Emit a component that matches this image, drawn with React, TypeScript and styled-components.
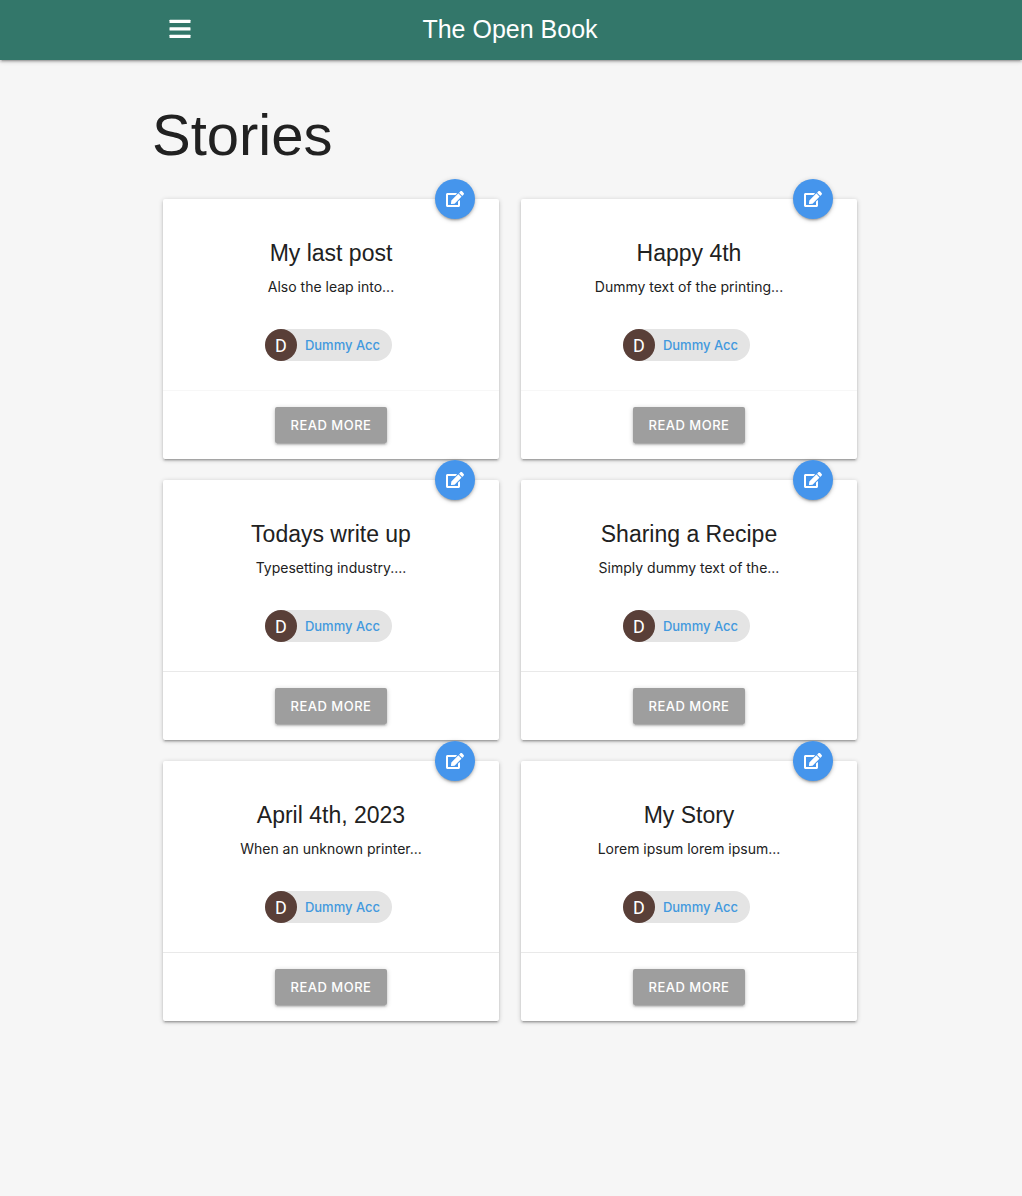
import React from "react";
import styled, { createGlobalStyle } from "styled-components";
import { FaEdit } from "react-icons/fa";

const GlobalStyle = createGlobalStyle`
  *, *::before, *::after { box-sizing: border-box; }
  body {
    margin: 0;
    min-height: 100vh;
    background: #f6f6f6;
    color: #212121;
    font-family: Inter, "Open Sans", sans-serif;
    font-size: 14px;
    line-height: 21px;
  }
  a { color: inherit; text-decoration: none; }
`;

const headingFont = '"Liberation Sans", Arial, sans-serif';

const raised =
  "0 2px 2px 0 rgba(0,0,0,0.14), 0 3px 1px -2px rgba(0,0,0,0.12), 0 1px 5px 0 rgba(0,0,0,0.2)";

const Header = styled.header`
  background: #33776a;
  color: #fff;
  padding: 0 2px 2px 0;
  box-shadow: ${raised};
`;

const Nav = styled.nav`
  display: grid;
  grid-template-columns: 1fr auto 1fr;
  align-items: center;
  width: 100%;
  max-width: 716px;
  height: 58px;
  margin: 0 auto;
`;

const MenuButton = styled.button`
  display: flex;
  justify-self: start;
  margin: 0 17px;
  padding: 0;
  border: 0;
  background: none;
  color: inherit;
  cursor: pointer;
`;

const Brand = styled.a`
  font-family: ${headingFont};
  font-size: 25px;
  line-height: 58px;
`;

const Main = styled.main`
  padding-right: 2px;
`;

const Container = styled.div`
  width: 100%;
  max-width: 716px;
  margin: 0 auto;
`;

const PageTitle = styled.h1`
  margin: 0;
  padding: 41px 0 30px;
  font-family: ${headingFont};
  font-size: 58px;
  font-weight: 400;
  line-height: 68px;
`;

const Grid = styled.div`
  display: grid;
  grid-template-columns: repeat(auto-fit, minmax(300px, 1fr));
  gap: 21px 22px;
  padding: 0 11px 21px;
`;

const Card = styled.article`
  position: relative;
  background: #fff;
  border-radius: 2px;
  text-align: center;
  box-shadow: ${raised};
`;

const EditLink = styled.a`
  position: absolute;
  top: -20px;
  right: 24px;
  display: flex;
  align-items: center;
  justify-content: center;
  width: 40px;
  height: 40px;
  border-radius: 50%;
  background: #4595ec;
  color: #fff;
  box-shadow: ${raised};
`;

const CardBody = styled.div`
  padding: 38px 24px 29px;
`;

const CardTitle = styled.h2`
  margin: 0;
  font-family: ${headingFont};
  font-size: 23px;
  font-weight: 400;
  line-height: 32px;
`;

const Excerpt = styled.p`
  margin: 7px 0 32px;
`;

const Chip = styled.div`
  display: inline-flex;
  align-items: center;
  gap: 8px;
  height: 32px;
  margin-right: 5px;
  padding-right: 12px;
  border-radius: 16px;
  background: #e4e4e4;
  color: #4299de;
  font-size: 13px;
  font-weight: 500;
  vertical-align: top;
`;

const Avatar = styled.span`
  display: flex;
  align-items: center;
  justify-content: center;
  width: 32px;
  height: 32px;
  border-radius: 50%;
  background: #593f38;
  color: #fff;
  font-family: Roboto, sans-serif;
  font-size: 18px;
  font-weight: 400;
`;

const CardAction = styled.div<{ $faint: boolean }>`
  padding: 16px 24px;
  border-top: 1px solid ${(p) => (p.$faint ? "#f7f7f7" : "#e9e9e9")};
`;

const ReadMore = styled.button`
  display: inline-block;
  height: 36px;
  padding: 0 16px;
  border: 0;
  border-radius: 2px;
  background: #9e9e9e;
  color: #fff;
  font: 500 13px/36px Inter, "Open Sans", sans-serif;
  letter-spacing: 0.5px;
  text-transform: uppercase;
  vertical-align: top;
  cursor: pointer;
  box-shadow: ${raised};
`;

const stories = [
  { title: "My last post", excerpt: "Also the leap into..." },
  { title: "Happy 4th", excerpt: "Dummy text of the printing..." },
  { title: "Todays write up", excerpt: "Typesetting industry...." },
  { title: "Sharing a Recipe", excerpt: "Simply dummy text of the..." },
  { title: "April 4th, 2023", excerpt: "When an unknown printer..." },
  { title: "My Story", excerpt: "Lorem ipsum lorem ipsum..." },
];

export default function App() {
  return (
    <>
      <GlobalStyle />
      <Header>
        <Nav>
          <MenuButton aria-label="Open menu">
            <svg width="22" height="20" viewBox="0 0 22 20" fill="currentColor" aria-hidden="true">
              <rect x="0.5" y="0.7" width="21" height="3.4" rx="0.6" />
              <rect x="0.5" y="8.2" width="21" height="3.4" rx="0.6" />
              <rect x="0.5" y="15.7" width="21" height="3.4" rx="0.6" />
            </svg>
          </MenuButton>
          <Brand href="#">The Open Book</Brand>
        </Nav>
      </Header>
      <Main>
        <Container>
          <PageTitle>Stories</PageTitle>
          <Grid>
            {stories.map((story, index) => (
              <Card key={story.title}>
                <EditLink href="#" aria-label={`Edit ${story.title}`}>
                  <FaEdit size={18} />
                </EditLink>
                <CardBody>
                  <CardTitle>{story.title}</CardTitle>
                  <Excerpt>{story.excerpt}</Excerpt>
                  <Chip>
                    <Avatar>D</Avatar>
                    <a href="#">Dummy Acc</a>
                  </Chip>
                </CardBody>
                <CardAction $faint={index < 2}>
                  <ReadMore>Read more</ReadMore>
                </CardAction>
              </Card>
            ))}
          </Grid>
        </Container>
      </Main>
    </>
  );
}
